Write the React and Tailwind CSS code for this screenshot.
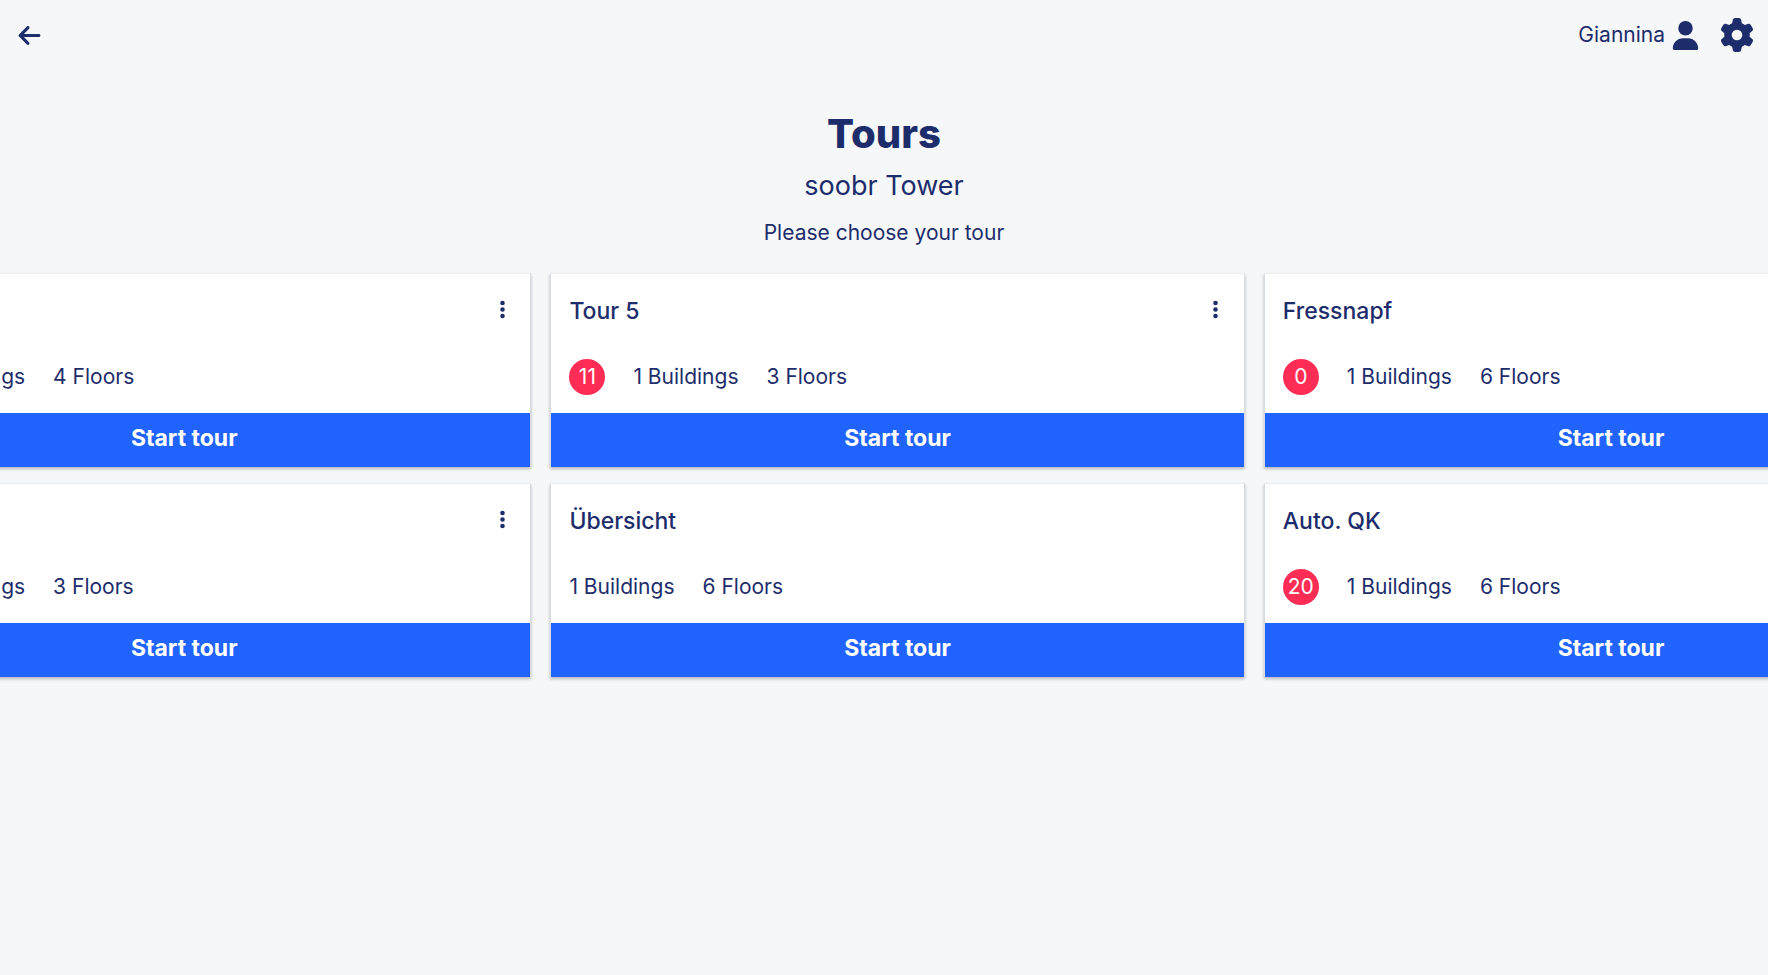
import React, { useLayoutEffect, useRef } from 'react';
import { FaArrowLeft, FaEllipsisVertical, FaGear, FaUser } from 'react-icons/fa6';

const tours = [
  { name: 'Tour 3', tasks: 4, buildings: 1, floors: 4, menu: true },
  { name: 'Tour 4', tasks: 8, buildings: 1, floors: 3, menu: true },
  { name: 'Tour 5', tasks: 11, buildings: 1, floors: 3, menu: true },
  { name: 'Übersicht', tasks: null, buildings: 1, floors: 6, menu: false },
  { name: 'Fressnapf', tasks: 0, buildings: 1, floors: 6, menu: true },
  { name: 'Auto. QK', tasks: 20, buildings: 1, floors: 6, menu: false },
];

const TourCard = ({ tour }) => (
  <article className="flex flex-col bg-white border border-[#d6dae4] border-t-[#eceef1] border-b-0 shadow-[0_2px_3px_rgba(0,0,0,0.25)]">
    <div className="flex items-start justify-between pl-[18px] pr-4 pt-[21px]">
      <h2 className="text-[23px] leading-8 font-medium">{tour.name}</h2>
      {tour.menu && (
        <button aria-label={`Options for ${tour.name}`} className="flex w-6 h-7 items-center justify-center">
          <FaEllipsisVertical size={21} />
        </button>
      )}
    </div>
    <div className="flex items-center gap-7 h-9 mt-8 mb-[18px] px-[18px] text-[21px]">
      {tour.tasks !== null && (
        <span className="flex items-center justify-center size-9 rounded-full bg-[#ff2d55] text-white">
          {tour.tasks}
        </span>
      )}
      <span>{tour.buildings} Buildings</span>
      <span>{tour.floors} Floors</span>
    </div>
    <button className="bg-[#2063ff] text-white text-[23px] leading-8 font-bold pt-[9px] pb-[13px]">
      Start tour
    </button>
  </article>
);

const App = () => {
  const listRef = useRef(null);

  useLayoutEffect(() => {
    listRef.current.scrollLeft = 179;
  }, []);

  return (
    <div className="min-h-screen bg-[#f6f7f9] text-[#1d2d6b] font-[Inter,sans-serif]">
      <header className="flex items-center justify-between h-[70px] pl-[17px] pr-[14px]">
        <a href="#back" aria-label="Back">
          <FaArrowLeft size={25} />
        </a>
        <div className="flex items-center gap-5">
          <a href="#profile" className="flex items-center gap-1.5 text-[21px]">
            Giannina
            <FaUser size={29} />
          </a>
          <button aria-label="Settings">
            <FaGear size={34} />
          </button>
        </div>
      </header>

      <main>
        <div className="flex flex-col items-center pt-10 pb-5 text-center">
          <h1 className="text-[40px] leading-12 font-extrabold">Tours</h1>
          <p className="text-[27px] leading-9 mt-[10px]">soobr Tower</p>
          <p className="text-[21px] leading-8 mt-[13px]">Please choose your tour</p>
        </div>

        <div
          ref={listRef}
          className="grid grid-rows-2 grid-flow-col auto-cols-[40%] gap-x-[19px] gap-y-4 px-4 pt-1 pb-4 overflow-x-auto [scrollbar-width:none]"
        >
          {tours.map((tour) => (
            <TourCard key={tour.name} tour={tour} />
          ))}
        </div>
      </main>
    </div>
  );
};

export default App;
